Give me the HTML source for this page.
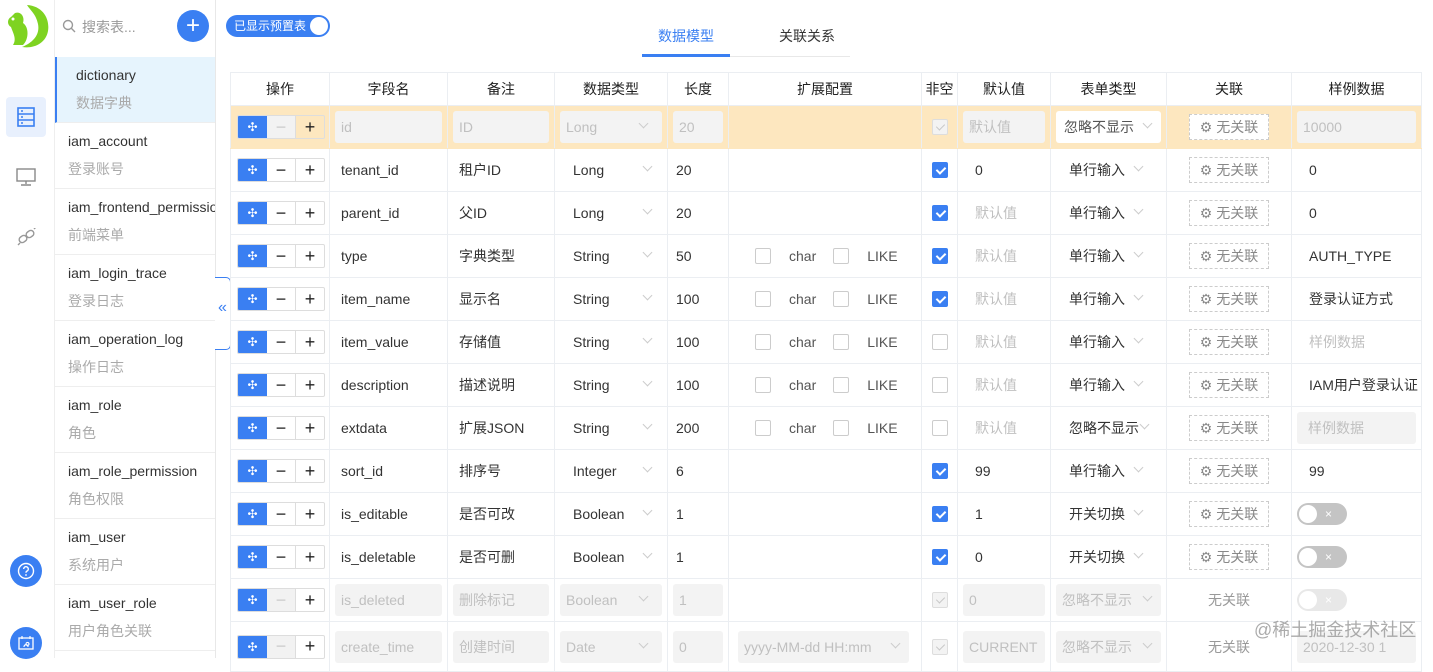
<!DOCTYPE html>
<html><head><meta charset="utf-8">
<style>
*{box-sizing:border-box;margin:0;padding:0}
body{width:1433px;height:658px;overflow:hidden;background:#fff;font-family:"Liberation Sans","Noto Sans CJK SC",sans-serif;font-size:14px;color:#333;position:relative}
.abs{position:absolute}
.side{left:0;top:0;width:55px;height:658px;border-right:1px solid #eee}
.list{left:55px;top:0;width:161px;height:658px;border-right:1px solid #e8e8e8;overflow:hidden}
.item{position:absolute;left:0;width:160px;height:66px;border-bottom:1px solid #eee;padding-left:13px;white-space:nowrap;overflow:hidden}
.item .n{position:absolute;top:10px;font-size:14px;color:#333}
.item .s{position:absolute;top:36px;font-size:14px;color:#aaa}
table{position:absolute;left:230px;top:72px;border-collapse:collapse;table-layout:fixed;width:1191px}
td,th{border:1px solid #ebeef2;height:43px;padding:0;white-space:nowrap;overflow:hidden;vertical-align:middle}
th{height:33px;font-weight:normal;color:#222;font-size:14px;text-align:center}
tr.hl td{background:#fde7bf;border-color:#fde7bf #ebeef2}
.t{padding-left:11px}
.t8{padding-left:8px}
.t16{padding-left:17px}
.dis{margin:0 5px;height:32px;background:#f3f3f3;border-radius:3px;color:#c0c0c0;padding-left:6px;line-height:32px;position:relative;overflow:hidden}
.ph{color:#c0c0c0}
.sel{padding-left:18px;position:relative}
.chev{display:inline-block;width:7px;height:7px;border-right:1px solid #ccc;border-bottom:1px solid #ccc;transform:rotate(45deg);position:absolute;top:50%;margin-top:-7px}
.ops{display:flex;margin-left:6px;width:88px;height:24px;border:1px solid #ddd;border-radius:2px;overflow:hidden}
.ops div{flex:1;display:flex;align-items:center;justify-content:center;font-size:18px;color:#222;font-weight:300}
.ops .mv{background:#3a7ff2;color:#fff;width:29px;flex:none;font-size:12px}
.ops .mi{border-right:1px solid #ddd}
.ops .mi.d{background:#f2f2f2;color:#ccc}
.cb{width:16px;height:16px;border:1px solid #ccc;border-radius:2px;margin:0 auto;position:relative;background:#fff}
.cb.on{background:#3a7ff2;border-color:#3a7ff2}
.cb.on:after,.cb.dd:after{content:"";position:absolute;left:5px;top:2px;width:4px;height:7px;border-right:2px solid #fff;border-bottom:2px solid #fff;transform:rotate(45deg)}
.cb.dd{background:#f3f3f3;border-color:#ddd}
.cb.dd:after{border-color:#c8c8c8;border-width:0 1px 1px 0}
.rel{width:80px;height:26px;border:1px dashed #ccc;margin:0 auto;display:flex;align-items:center;justify-content:center;color:#888;font-size:14px;gap:5px}
.ext{display:flex;align-items:center;padding-left:26px;color:#555}
.ext .cb{margin:0 18px 0 0}
.tg{width:50px;height:22px;border-radius:11px;background:#c4c4c4;margin-left:5px;position:relative;color:#fff;font-size:12px;line-height:22px;padding-left:28px}
.tg:before{content:"";position:absolute;left:2px;top:2px;width:18px;height:18px;border-radius:50%;background:#fff}
.tg.l{background:#e8e8e8}
</style></head><body>

<div class="abs side">
 <svg class="abs" style="left:3px;top:3px" width="46" height="46" viewBox="0 0 46 46"><path d="M24 2 C40 3 47 16 45 28 C43 40 31 46 19 44 C31 39 37 31 35 21 C33 11 27 7 24 2Z" fill="#7ed321"/><path d="M12 10 C18 8 22 14 20 20 C26 24 26 36 20 42 L10 42 C14 36 10 30 8 24 C4 22 4 16 8 14Z" fill="#7ed321"/><circle cx="10" cy="16" r="1.5" fill="#fff"/></svg>
 <div class="abs" style="left:6px;top:97px;width:40px;height:40px;background:#e8f0fd;border-radius:4px"></div>
 <svg class="abs" style="left:17px;top:107px" width="18" height="20" viewBox="0 0 18 20"><rect x="1" y="1" width="16" height="18" fill="none" stroke="#3a7ff2" stroke-width="1.6"/><path d="M1 7H17M1 13H17" stroke="#3a7ff2" stroke-width="1.6"/><path d="M4 4H6M4 10H6M4 16H6" stroke="#3a7ff2" stroke-width="1.6"/></svg>
 <svg class="abs" style="left:16px;top:168px" width="20" height="18" viewBox="0 0 20 18"><rect x="1" y="1" width="18" height="12" fill="none" stroke="#888" stroke-width="1.4"/><path d="M10 13V16M5 17H15" stroke="#888" stroke-width="1.4"/></svg>
 <svg class="abs" style="left:17px;top:228px" width="20" height="18" viewBox="0 0 20 18"><g fill="none" stroke="#999" stroke-width="1.4"><rect x="2" y="8" width="8" height="6" rx="3" transform="rotate(-35 6 11)"/><rect x="9" y="3" width="8" height="6" rx="3" transform="rotate(-35 13 6)"/><path d="M1 17L3 15M17 1L19 -1"/></g></svg>
 <div class="abs" style="left:10px;top:555px;width:32px;height:32px;border-radius:50%;background:#3a7ff2"></div>
 <svg class="abs" style="left:17px;top:562px" width="18" height="18" viewBox="0 0 18 18"><circle cx="9" cy="9" r="7.5" fill="none" stroke="#fff" stroke-width="1.4"/><path d="M6.7 7a2.3 2.3 0 1 1 3 2.2c-.6.3-.7.7-.7 1.5" fill="none" stroke="#fff" stroke-width="1.4"/><circle cx="9" cy="13" r=".9" fill="#fff"/></svg>
 <div class="abs" style="left:10px;top:627px;width:32px;height:32px;border-radius:50%;background:#3a7ff2"></div>
 <svg class="abs" style="left:18px;top:636px" width="16" height="14" viewBox="0 0 16 14"><rect x="1" y="2" width="14" height="11" fill="none" stroke="#fff" stroke-width="1.3"/><path d="M4 0V3M12 0V3M6 11C6 8 10 8 10 11M8 8a1.5 1.5 0 1 0 0-.1" fill="none" stroke="#fff" stroke-width="1.2"/></svg>
</div>

<div class="abs list">
 <svg class="abs" style="left:7px;top:19px" width="14" height="14" viewBox="0 0 14 14"><circle cx="6" cy="6" r="4.5" fill="none" stroke="#999" stroke-width="1.4"/><path d="M9.3 9.3L13 13" stroke="#999" stroke-width="1.4"/></svg>
 <div class="abs" style="left:27px;top:17px;color:#999;font-size:14px">搜索表...</div>
 <div class="abs" style="left:122px;top:10px;width:32px;height:32px;border-radius:50%;background:#3a7ff2;color:#fff;font-size:24px;line-height:31px;text-align:center">+</div>
 <div class="item" style="top:57px;background:#e6f4fd;border-left:2px solid #3a7ff2;padding-left:19px"><div class="n">dictionary</div><div class="s">数据字典</div></div>
 <div class="item" style="top:123px"><div class="n">iam_account</div><div class="s">登录账号</div></div>
 <div class="item" style="top:189px"><div class="n">iam_frontend_permission</div><div class="s">前端菜单</div></div>
 <div class="item" style="top:255px"><div class="n">iam_login_trace</div><div class="s">登录日志</div></div>
 <div class="item" style="top:321px"><div class="n">iam_operation_log</div><div class="s">操作日志</div></div>
 <div class="item" style="top:387px"><div class="n">iam_role</div><div class="s">角色</div></div>
 <div class="item" style="top:453px"><div class="n">iam_role_permission</div><div class="s">角色权限</div></div>
 <div class="item" style="top:519px"><div class="n">iam_user</div><div class="s">系统用户</div></div>
 <div class="item" style="top:585px"><div class="n">iam_user_role</div><div class="s">用户角色关联</div></div>
</div>
<div class="abs" style="left:215px;top:277px;width:16px;height:73px;border:1px solid #3a7ff2;border-left:none;border-radius:0 5px 5px 0;background:#fff;color:#3a7ff2;font-size:16px;line-height:60px;text-align:center">«</div>

<div class="abs" style="left:226px;top:15px;width:104px;height:22px;border-radius:11px;background:#3a7ff2;color:#fff;font-size:12px;line-height:22px;padding-left:8px">已显示预置表</div>
<div class="abs" style="left:310px;top:17px;width:18px;height:18px;border-radius:50%;background:#fff"></div>
<div class="abs" style="left:642px;top:26px;width:88px;text-align:center;color:#3a7ff2">数据模型</div>
<div class="abs" style="left:765px;top:26px;width:84px;text-align:center;color:#333">关联关系</div>
<div class="abs" style="left:642px;top:56px;width:208px;height:1px;background:#e8e8e8"></div>
<div class="abs" style="left:642px;top:54px;width:88px;height:3px;background:#3a7ff2"></div>

<table>
<colgroup><col style="width:99px"><col style="width:118px"><col style="width:107px"><col style="width:113px"><col style="width:61px"><col style="width:193px"><col style="width:36px"><col style="width:93px"><col style="width:116px"><col style="width:125px"><col style="width:130px"></colgroup>
<tr><th>操作</th><th>字段名</th><th>备注</th><th>数据类型</th><th>长度</th><th>扩展配置</th><th>非空</th><th>默认值</th><th>表单类型</th><th>关联</th><th>样例数据</th></tr>
<tr class="hl"><td><div class="ops"><div class="mv">✣</div><div class="mi d">−</div><div>+</div></div></td><td><div class="dis">id</div></td><td><div class="dis">ID</div></td><td><div class="dis">Long<span class="chev" style="left:80px;top:16px"></span></div></td><td><div class="dis">20</div></td><td></td><td><div class="cb dd"></div></td><td><div class="dis">默认值</div></td><td><div class="dis" style="background:#fff;color:#555;padding-left:8px">忽略不显示<span class="chev" style="left:88px;top:16px"></span></div></td><td><div class="rel" style="background:#fff">⚙ 无关联</div></td><td><div class="dis">10000</div></td></tr>
<tr><td><div class="ops"><div class="mv">✣</div><div class="mi">−</div><div>+</div></div></td><td class="t">tenant_id</td><td class="t">租户ID</td><td class="sel">Long<span class="chev" style="left:89px"></span></td><td class="t8">20</td><td></td><td><div class="cb on"></div></td><td class="t16">0</td><td class="sel">单行输入<span class="chev" style="left:84px"></span></td><td><div class="rel">⚙ 无关联</div></td><td class="t16">0</td></tr>
<tr><td><div class="ops"><div class="mv">✣</div><div class="mi">−</div><div>+</div></div></td><td class="t">parent_id</td><td class="t">父ID</td><td class="sel">Long<span class="chev" style="left:89px"></span></td><td class="t8">20</td><td></td><td><div class="cb on"></div></td><td class="t16 ph">默认值</td><td class="sel">单行输入<span class="chev" style="left:84px"></span></td><td><div class="rel">⚙ 无关联</div></td><td class="t16">0</td></tr>
<tr><td><div class="ops"><div class="mv">✣</div><div class="mi">−</div><div>+</div></div></td><td class="t">type</td><td class="t">字典类型</td><td class="sel">String<span class="chev" style="left:89px"></span></td><td class="t8">50</td><td><div class="ext"><div class="cb"></div><span style="margin-right:17px">char</span><div class="cb"></div>LIKE</div></td><td><div class="cb on"></div></td><td class="t16 ph">默认值</td><td class="sel">单行输入<span class="chev" style="left:84px"></span></td><td><div class="rel">⚙ 无关联</div></td><td class="t16">AUTH_TYPE</td></tr>
<tr><td><div class="ops"><div class="mv">✣</div><div class="mi">−</div><div>+</div></div></td><td class="t">item_name</td><td class="t">显示名</td><td class="sel">String<span class="chev" style="left:89px"></span></td><td class="t8">100</td><td><div class="ext"><div class="cb"></div><span style="margin-right:17px">char</span><div class="cb"></div>LIKE</div></td><td><div class="cb on"></div></td><td class="t16 ph">默认值</td><td class="sel">单行输入<span class="chev" style="left:84px"></span></td><td><div class="rel">⚙ 无关联</div></td><td class="t16">登录认证方式</td></tr>
<tr><td><div class="ops"><div class="mv">✣</div><div class="mi">−</div><div>+</div></div></td><td class="t">item_value</td><td class="t">存储值</td><td class="sel">String<span class="chev" style="left:89px"></span></td><td class="t8">100</td><td><div class="ext"><div class="cb"></div><span style="margin-right:17px">char</span><div class="cb"></div>LIKE</div></td><td><div class="cb"></div></td><td class="t16 ph">默认值</td><td class="sel">单行输入<span class="chev" style="left:84px"></span></td><td><div class="rel">⚙ 无关联</div></td><td class="t16 ph">样例数据</td></tr>
<tr><td><div class="ops"><div class="mv">✣</div><div class="mi">−</div><div>+</div></div></td><td class="t">description</td><td class="t">描述说明</td><td class="sel">String<span class="chev" style="left:89px"></span></td><td class="t8">100</td><td><div class="ext"><div class="cb"></div><span style="margin-right:17px">char</span><div class="cb"></div>LIKE</div></td><td><div class="cb"></div></td><td class="t16 ph">默认值</td><td class="sel">单行输入<span class="chev" style="left:84px"></span></td><td><div class="rel">⚙ 无关联</div></td><td class="t16">IAM用户登录认证</td></tr>
<tr><td><div class="ops"><div class="mv">✣</div><div class="mi">−</div><div>+</div></div></td><td class="t">extdata</td><td class="t">扩展JSON</td><td class="sel">String<span class="chev" style="left:89px"></span></td><td class="t8">200</td><td><div class="ext"><div class="cb"></div><span style="margin-right:17px">char</span><div class="cb"></div>LIKE</div></td><td><div class="cb"></div></td><td class="t16 ph">默认值</td><td class="sel">忽略不显示<span class="chev" style="left:90px"></span></td><td><div class="rel">⚙ 无关联</div></td><td><div class="dis" style="padding-left:11px">样例数据</div></td></tr>
<tr><td><div class="ops"><div class="mv">✣</div><div class="mi">−</div><div>+</div></div></td><td class="t">sort_id</td><td class="t">排序号</td><td class="sel">Integer<span class="chev" style="left:89px"></span></td><td class="t8">6</td><td></td><td><div class="cb on"></div></td><td class="t16">99</td><td class="sel">单行输入<span class="chev" style="left:84px"></span></td><td><div class="rel">⚙ 无关联</div></td><td class="t16">99</td></tr>
<tr><td><div class="ops"><div class="mv">✣</div><div class="mi">−</div><div>+</div></div></td><td class="t">is_editable</td><td class="t">是否可改</td><td class="sel">Boolean<span class="chev" style="left:89px"></span></td><td class="t8">1</td><td></td><td><div class="cb on"></div></td><td class="t16">1</td><td class="sel">开关切换<span class="chev" style="left:84px"></span></td><td><div class="rel">⚙ 无关联</div></td><td><div class="tg">×</div></td></tr>
<tr><td><div class="ops"><div class="mv">✣</div><div class="mi">−</div><div>+</div></div></td><td class="t">is_deletable</td><td class="t">是否可删</td><td class="sel">Boolean<span class="chev" style="left:89px"></span></td><td class="t8">1</td><td></td><td><div class="cb on"></div></td><td class="t16">0</td><td class="sel">开关切换<span class="chev" style="left:84px"></span></td><td><div class="rel">⚙ 无关联</div></td><td><div class="tg">×</div></td></tr>
<tr><td><div class="ops"><div class="mv">✣</div><div class="mi d">−</div><div>+</div></div></td><td><div class="dis">is_deleted</div></td><td><div class="dis">删除标记</div></td><td><div class="dis">Boolean<span class="chev" style="left:80px;top:16px"></span></div></td><td><div class="dis">1</div></td><td></td><td><div class="cb dd"></div></td><td><div class="dis">0</div></td><td><div class="dis">忽略不显示<span class="chev" style="left:88px;top:16px"></span></div></td><td style="text-align:center;color:#999">无关联</td><td><div class="tg l">×</div></td></tr>
<tr><td style="height:50px"><div class="ops"><div class="mv">✣</div><div class="mi d">−</div><div>+</div></div></td><td><div class="dis">create_time</div></td><td><div class="dis">创建时间</div></td><td><div class="dis">Date<span class="chev" style="left:80px;top:16px"></span></div></td><td><div class="dis">0</div></td><td><div class="dis" style="margin-left:9px;margin-right:12px">yyyy-MM-dd HH:mm<span class="chev" style="left:154px;top:16px"></span></div></td><td><div class="cb dd"></div></td><td><div class="dis">CURRENT</div></td><td><div class="dis">忽略不显示<span class="chev" style="left:88px;top:16px"></span></div></td><td style="text-align:center;color:#999">无关联</td><td><div class="dis">2020-12-30 1</div></td></tr>
</table>
<div class="abs" style="left:1254px;top:616px;color:rgba(150,150,150,.8);font-size:18px">@稀土掘金技术社区</div>
</body></html>
